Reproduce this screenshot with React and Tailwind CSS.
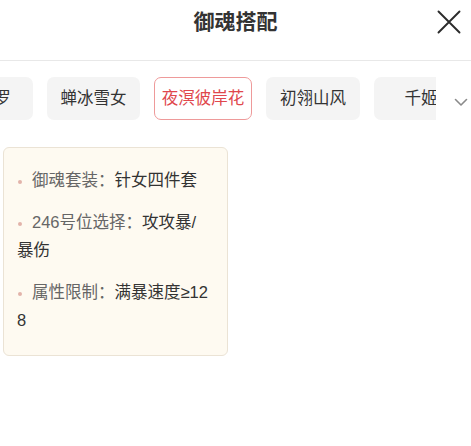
import React from "react";

const tabs = [
  { name: "紧那罗", w: "w-[94px]" },
  { name: "蝉冰雪女", w: "w-[93px]" },
  { name: "夜溟彼岸花", w: "w-[98px]", active: true },
  { name: "初翎山风", w: "w-[94px]" },
  { name: "千姬", w: "w-[94px]" },
];

const items = [
  { label: "御魂套装：", value: "针女四件套" },
  { label: "246号位选择：", value: "攻攻暴/暴伤" },
  { label: "属性限制：", value: "满暴速度≥128" },
];

export default function App() {
  return (
    <div
      className="w-[471px] h-[446px] bg-white overflow-hidden"
      style={{ fontFamily: '"Liberation Sans", "Noto Sans CJK SC", sans-serif' }}
    >
      <div className="relative h-[61px] border-b border-[#e8e8e8] flex items-center justify-center">
        <div className="text-[21px] font-bold text-[#333] leading-none -mt-[17px]">御魂搭配</div>
        <svg
          className="absolute left-[437px] top-[10px]"
          width="24"
          height="24"
          viewBox="0 0 24 24"
          fill="none"
          stroke="#2b2b2b"
          strokeWidth="1.9"
          strokeLinecap="round"
        >
          <path d="M1.5 1.5 L22.5 22.5 M22.5 1.5 L1.5 22.5" />
        </svg>
      </div>

      <div className="flex items-center pt-[16px]">
        <div className="w-[436px] overflow-hidden">
          <div className="flex gap-[14px] -ml-[61px]">
            {tabs.map((t) => (
              <div
                key={t.name}
                className={
                  "shrink-0 h-[43px] rounded-[7px] flex items-center justify-center text-[16.5px] whitespace-nowrap " +
                  t.w +
                  (t.active
                    ? " bg-white border border-[#ee9a9a] text-[#e0474c]"
                    : " bg-[#f4f4f4] text-[#333]")
                }
              >
                {t.name}
              </div>
            ))}
          </div>
        </div>
        <div className="flex-1 flex justify-center pl-[14px] pt-[7px]">
          <svg width="14" height="9" viewBox="0 0 14 9" fill="none" stroke="#8a8a8a" strokeWidth="1.6" strokeLinecap="round" strokeLinejoin="round">
            <path d="M1.5 1.5 L7 7 L12.5 1.5" />
          </svg>
        </div>
      </div>

      <div className="ml-[3px] mt-[27px] w-[225px] h-[209px] bg-[#fefaf1] border border-[#ebe3d5] rounded-[6px] pl-[13px] pr-[17px] pt-[18px]">
        {items.map((it, i) => (
          <p key={i} className="text-[16.5px] leading-[28px] mb-[14px] break-all">
            <span className="inline-block w-[4px] h-[4px] rounded-full bg-[#e2b3aa] align-middle mr-[10px] ml-[1px]"></span>
            <span className="text-[#666]">{it.label}</span>
            <span className="text-[#333]">{it.value}</span>
          </p>
        ))}
      </div>
    </div>
  );
}
